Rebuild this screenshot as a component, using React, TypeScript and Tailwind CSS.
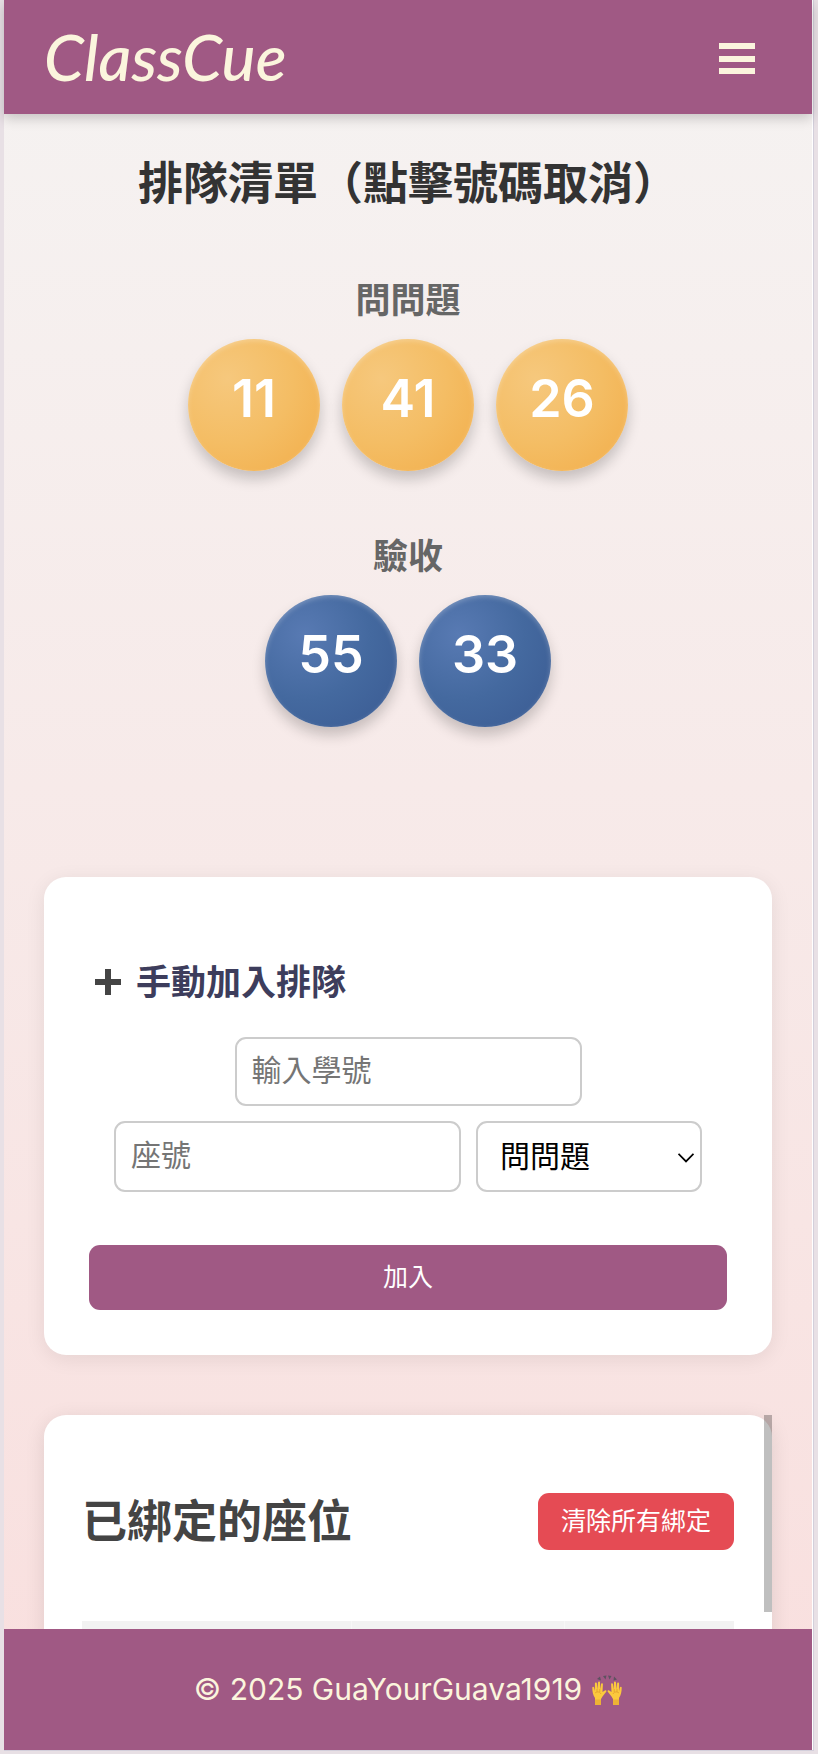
import React, { useState } from "react";

type Kind = "question" | "check";

const circleStyles: Record<Kind, string> = {
  question: "bg-[radial-gradient(circle_at_30%_30%,#f6c87d,#f4bd64_50%,#f2ad49)]",
  check: "bg-[radial-gradient(circle_at_30%_30%,#587ab3,#44699f_50%,#3a5a92)]",
};

function QueueGroup({ title, kind, numbers }: { title: string; kind: Kind; numbers: number[] }) {
  return (
    <section className="flex flex-col items-center gap-[19px]">
      <h3 className="text-[35px] leading-10 font-bold text-[#666]">{title}</h3>
      <div className="flex flex-wrap justify-center gap-[22px]">
        {numbers.map((n) => (
          <button
            key={n}
            type="button"
            className={`flex size-[132px] items-center justify-center rounded-full pb-3 text-[52px] font-semibold text-white shadow-[0_8px_14px_rgba(0,0,0,0.2),inset_0_2px_5px_rgba(255,255,255,0.25)] ${circleStyles[kind]}`}
          >
            {n}
          </button>
        ))}
      </div>
    </section>
  );
}

function Hand() {
  return (
    <>
      <path
        d="M3 30V23C1 20 .3 17 .3 12.500c0-1 1.500-1.200 1.800 0l.8 3.500V8.500c0-1.300 1.900-1.300 2 0l.4 6L6 7.500c.1-1.300 2-1.200 2 0v7l1-5.500c.3-1.200 2-.9 1.900.3L10.500 17l2.300-1.600c1.200-.7 2.200.3 1.400 1.400L10.500 21.500 9 24v6z"
        fill="#fbc93d"
      />
      <path d="M3 24.500h6V30H3z" fill="#e5a42f" opacity=".6" />
      <path d="M5 14v3M7.800 14v3M3 18c2-1.500 5-1.500 6 1" stroke="#dc982c" strokeWidth=".7" fill="none" />
    </>
  );
}

function RaisedHands() {
  return (
    <svg viewBox="0 0 30 30" className="size-[30px]" role="img" aria-label="raised hands">
      <g fill="#5d5260">
        <path d="M5 4 8 1.500 9 5.500z" />
        <path d="M11 1 14.500 .5 13.500 4.500z" />
        <path d="M16 .5 19.500 1 17.500 4.500z" />
        <path d="M22 1.500 25 4.500 21.500 5.500z" />
      </g>
      <Hand />
      <g transform="matrix(-1 0 0 1 30 0)">
        <Hand />
      </g>
    </svg>
  );
}

export default function App() {
  const [studentId, setStudentId] = useState("");
  const [seat, setSeat] = useState("");
  const [kind, setKind] = useState<Kind>("question");

  return (
    <div className="h-screen bg-[#e8e0e5] pr-1 pb-[3px] pl-1 font-['Inter','Noto_Sans_CJK_TC',sans-serif]">
      <div className="flex h-full flex-col border-r border-b border-[#d3cfdb]">
        <div className="flex min-h-0 flex-1 flex-col border-r border-white bg-linear-to-b from-[#f5f3f2] to-[#f9dfde]">
          <header className="z-10 flex h-[114px] shrink-0 items-center justify-between bg-[#a05984] pr-[57px] pl-10 shadow-[0_4px_12px_rgba(0,0,0,0.2)]">
            <a href="#" className="font-['Lato',sans-serif] text-[64px] leading-none font-medium text-[#fbf5dd] italic">
              ClassCue
            </a>
            <button type="button" aria-label="選單" className="pt-1 text-[#fbf5dd]">
              <svg width="36" height="32" viewBox="0 0 36 32" fill="currentColor">
                <path d="M0 0h36v6H0zM0 13h36v6H0zM0 25h36v6H0z" />
              </svg>
            </button>
          </header>

          <main className="min-h-0 flex-1 overflow-hidden px-10 pt-[43px]">
            <h2 className="text-center text-[45px] leading-[54px] font-bold text-[#333]">排隊清單（點擊號碼取消）</h2>

            <div className="mt-[69px] flex flex-col gap-[65px]">
              <QueueGroup title="問問題" kind="question" numbers={[11, 41, 26]} />
              <QueueGroup title="驗收" kind="check" numbers={[55, 33]} />
            </div>

            <form
              onSubmit={(e) => e.preventDefault()}
              className="mt-[150px] rounded-[22px] bg-white px-[45px] pt-[85px] pb-[45px] shadow-[0_4px_20px_rgba(0,0,0,0.08)]"
            >
              <h3 className="flex items-center gap-[15px] pl-1.5 text-[35px] leading-10 font-bold text-[#3d3d5c]">
                <svg width="26" height="26" viewBox="0 0 26 26" fill="#444" aria-hidden="true">
                  <path d="M10 0h6v10h10v6H16v10h-6V16H0v-6h10z" />
                </svg>
                手動加入排隊
              </h3>
              <div className="mt-[35px] flex flex-wrap justify-center gap-[15px] text-[30px]">
                <input
                  type="text"
                  aria-label="輸入學號"
                  placeholder="輸入學號"
                  value={studentId}
                  onChange={(e) => setStudentId(e.target.value)}
                  className="h-[69px] w-[347px] rounded-[11px] border-2 border-[#ccc] bg-white px-[15px] pb-1 text-black placeholder:text-[#757575]"
                />
                <div className="flex w-full justify-center gap-[15px]">
                  <input
                    type="text"
                    aria-label="座號"
                    placeholder="座號"
                    value={seat}
                    onChange={(e) => setSeat(e.target.value)}
                    className="h-[71px] w-[347px] rounded-[11px] border-2 border-[#ccc] bg-white px-[15px] pb-1 text-black placeholder:text-[#757575]"
                  />
                  <div className="relative">
                    <select
                      aria-label="類型"
                      value={kind}
                      onChange={(e) => setKind(e.target.value as Kind)}
                      className="h-[71px] w-[226px] appearance-none rounded-[11px] border-2 border-[#ccc] bg-white px-[22px] text-black"
                    >
                      <option value="question">問問題</option>
                      <option value="check">驗收</option>
                    </select>
                    <svg
                      viewBox="0 0 16 10"
                      className="pointer-events-none absolute top-8 right-2 h-[10px] w-4"
                      fill="none"
                      stroke="#000"
                      strokeWidth="1.8"
                    >
                      <path d="M.5.8 8 8.500 15.500.8" />
                    </svg>
                  </div>
                </div>
              </div>
              <button type="submit" className="mt-[53px] h-[65px] w-full rounded-[11px] bg-[#a05984] text-[25px] text-white">
                加入
              </button>
            </form>

            <section className="relative mt-[60px] rounded-[22px] bg-white px-[38px] pt-[78px] pb-10 shadow-[0_4px_20px_rgba(0,0,0,0.1)]">
              <div className="flex items-center justify-between">
                <h2 className="text-[45px] leading-[57px] font-bold text-[#444]">已綁定的座位</h2>
                <button type="button" className="h-[57px] rounded-[11px] bg-[#e54b54] px-[23px] text-[25px] text-white">
                  清除所有綁定
                </button>
              </div>
              <table aria-label="已綁定的座位" className="mt-[71px] w-full table-fixed">
                <thead>
                  <tr className="h-16 bg-[#f2f2f2]">
                    <th scope="col" className="w-[269px] border-r border-[#f7f7f7]" />
                    <th scope="col" className="w-[213px] border-r border-[#f7f7f7]" />
                    <th scope="col" />
                  </tr>
                </thead>
              </table>
              <div className="absolute top-0 right-0 h-[197px] w-2 bg-black/25" />
            </section>
          </main>

          <footer className="flex h-[121px] shrink-0 items-center justify-center gap-2.5 bg-[#a05984] text-[30px] text-[#fbf5dd]">
            <span>© 2025 GuaYourGuava1919</span>
            <RaisedHands />
          </footer>
        </div>
      </div>
    </div>
  );
}
